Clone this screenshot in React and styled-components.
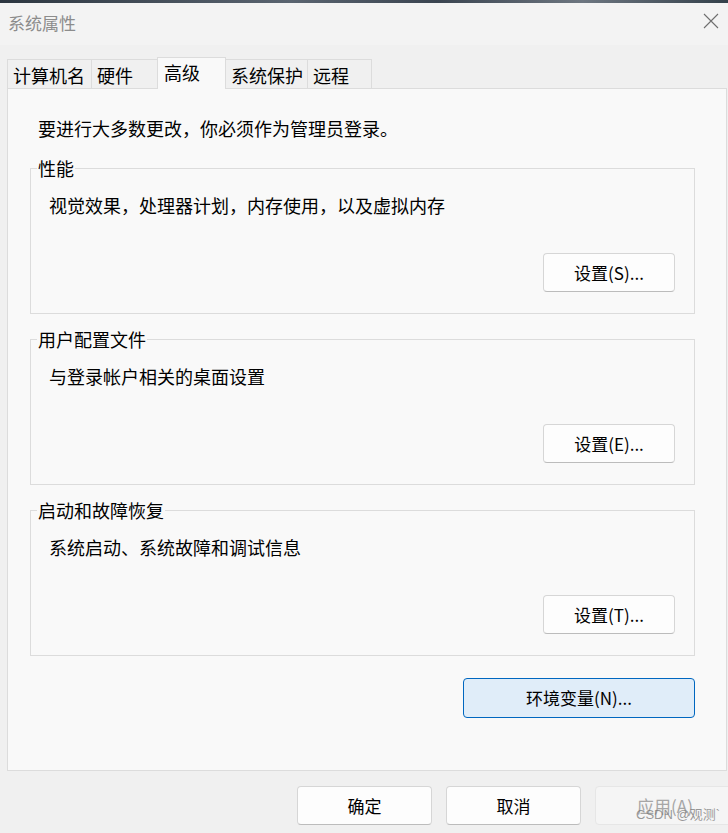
import React from 'react';
import styled, { createGlobalStyle } from 'styled-components';

const GlobalStyle = createGlobalStyle`
  html, body {
    margin: 0;
    padding: 0;
    background: #f0f0f0;
  }
  * {
    box-sizing: border-box;
  }
`;

const FONT = `"Noto Sans CJK SC", "Microsoft YaHei", sans-serif`;

const Window = styled.div`
  position: relative;
  width: 728px;
  height: 833px;
  overflow: hidden;
  display: flex;
  flex-direction: column;
  background: #f0f0f0;
  font-family: ${FONT};
  color: #000;
`;

const Desktop = styled.div`
  height: 3px;
  background: linear-gradient(90deg, #2c3640, #5a6470 40%, #3a4450 60%, #6d7680 80%, #33404a);
`;

const TitleBar = styled.div`
  height: 42px;
  display: flex;
  align-items: center;
  justify-content: space-between;
  padding-left: 8px;
  background: #f3f3f3;
`;

const Title = styled.span`
  font-size: 17px;
  line-height: 24px;
  color: #8c8c8c;
  margin-top: -3px;
`;

const CloseButton = styled.div`
  width: 46px;
  height: 42px;
  display: flex;
  align-items: center;
  justify-content: center;
  padding-left: 12px;
  margin-top: -6px;
`;

const Body = styled.div`
  flex: 1;
  display: flex;
  flex-direction: column;
  padding: 12px 0 0 7px;
`;

const TabRow = styled.div`
  display: flex;
  align-items: flex-end;
  height: 31px;
`;

const Tab = styled.div`
  position: relative;
  width: ${p => p.$w}px;
  height: ${p => (p.$active ? 32 : 29)}px;
  margin-left: -1px;
  margin-bottom: ${p => (p.$active ? -1 : 0)}px;
  z-index: ${p => (p.$active ? 2 : 1)};
  padding: ${p => (p.$active ? '2px 0 0 6px' : '3px 0 0 5px')};
  border: 1px solid #dcdcdc;
  border-bottom: none;
  background: ${p => (p.$active ? '#f9f9f9' : '#f0f0f0')};
  font-size: 18px;
  line-height: 24px;
  white-space: nowrap;
  &:first-child {
    margin-left: 0;
  }
`;

const Panel = styled.div`
  width: 720px;
  height: 683px;
  border: 1px solid #dcdcdc;
  background: #f9f9f9;
  padding: 27px 31px 0 22px;
  display: flex;
  flex-direction: column;
`;

const Notice = styled.div`
  font-size: 18px;
  line-height: 24px;
  margin-left: 8px;
`;

const Group = styled.fieldset`
  margin: ${p => p.$first ? 16 : 13}px 0 0 0;
  padding: 13px 19px 21px 18px;
  border: 1px solid #dcdcdc;
  display: flex;
  flex-direction: column;
  min-width: 0;
`;

const Legend = styled.legend`
  font-size: 18px;
  line-height: 24px;
  padding: 0 1px;
  margin-left: -12px;
`;

const Desc = styled.div`
  font-size: 18px;
  line-height: 24px;
`;

const Button = styled.button`
  font-family: ${FONT};
  font-size: 17px;
  color: ${p => (p.$disabled ? '#a6a6a6' : '#000')};
  width: ${p => p.$w}px;
  height: ${p => p.$h}px;
  flex: none;
  border-radius: 4px;
  border: 1px solid ${p => (p.$primary ? '#0067c0' : p.$disabled ? '#e6e6e6' : '#d6d6d6')};
  border-bottom-color: ${p => (p.$primary ? '#0067c0' : p.$disabled ? '#e6e6e6' : '#bcbcbc')};
  background: ${p => (p.$primary ? '#e0edf9' : p.$disabled ? '#f5f5f5' : '#fdfdfd')};
  padding: 0;
  line-height: 24px;
  cursor: default;
`;

const GroupButton = styled(Button)`
  align-self: flex-end;
  margin-top: 36px;
`;

const EnvButton = styled(Button)`
  align-self: flex-end;
  margin-top: 22px;
`;

const Footer = styled.div`
  display: flex;
  gap: 14px;
  padding: 15px 0 0 290px;
`;

const Watermark = styled.div`
  position: absolute;
  left: 636px;
  top: 806px;
  font-family: "Liberation Sans", "Noto Sans CJK SC", sans-serif;
  font-size: 13px;
  line-height: 18px;
  color: rgba(120, 120, 120, 0.75);
  pointer-events: none;
`;

const tabs = [
  { label: '计算机名', w: 85 },
  { label: '硬件', w: 67 },
  { label: '高级', w: 69, active: true },
  { label: '系统保护', w: 83 },
  { label: '远程', w: 65 },
];

const groups = [
  { title: '性能', desc: '视觉效果，处理器计划，内存使用，以及虚拟内存', btn: '设置(S)...' },
  { title: '用户配置文件', desc: '与登录帐户相关的桌面设置', btn: '设置(E)...' },
  { title: '启动和故障恢复', desc: '系统启动、系统故障和调试信息', btn: '设置(T)...' },
];

export default function App() {
  return (
    <>
      <GlobalStyle />
      <Window>
        <Desktop />
        <TitleBar>
          <Title>系统属性</Title>
          <CloseButton>
            <svg width="16" height="16" viewBox="0 0 16 16">
              <path d="M1 1 L15 15 M15 1 L1 15" stroke="#6e6e6e" strokeWidth="1.1" fill="none" />
            </svg>
          </CloseButton>
        </TitleBar>
        <Body>
          <TabRow>
            {tabs.map(t => (
              <Tab key={t.label} $w={t.w} $active={t.active}>{t.label}</Tab>
            ))}
          </TabRow>
          <Panel>
            <Notice>要进行大多数更改，你必须作为管理员登录。</Notice>
            {groups.map((g, i) => (
              <Group key={g.title} $first={i === 0}>
                <Legend>{g.title}</Legend>
                <Desc>{g.desc}</Desc>
                <GroupButton $w={132} $h={39}>{g.btn}</GroupButton>
              </Group>
            ))}
            <EnvButton $primary $w={232} $h={40}>环境变量(N)...</EnvButton>
          </Panel>
          <Footer>
            <Button $w={135} $h={39}>确定</Button>
            <Button $w={135} $h={39}>取消</Button>
            <Button $w={140} $h={39} $disabled>应用(A)</Button>
          </Footer>
        </Body>
        <Watermark>CSDN @观测`</Watermark>
      </Window>
    </>
  );
}
